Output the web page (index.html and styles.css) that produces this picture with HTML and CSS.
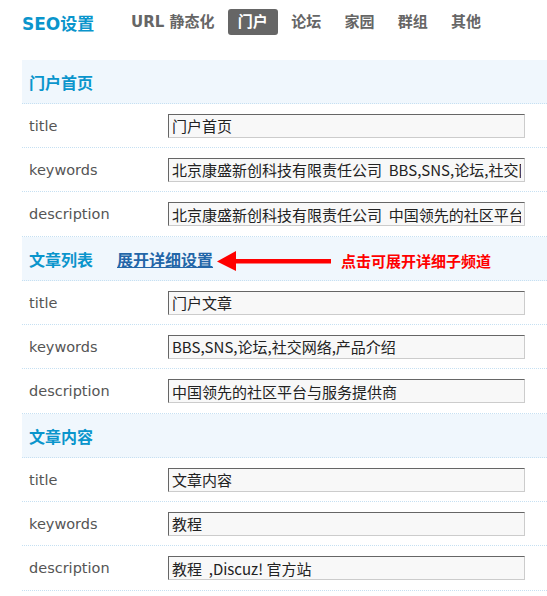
FILE: index.html
```html
<!DOCTYPE html>
<html lang="zh-CN">
<head>
<meta charset="utf-8">
<title>SEO设置</title>
<link rel="stylesheet" href="styles.css">
</head>
<body>
<div class="top">
  <h1 class="brand">SEO设置</h1>
  <nav class="tabs">
    <a class="tab">URL 静态化</a>
    <a class="tab on">门户</a>
    <a class="tab">论坛</a>
    <a class="tab">家园</a>
    <a class="tab">群组</a>
    <a class="tab">其他</a>
  </nav>
</div>

<div class="panel">
  <section class="group">
    <div class="sec"><span class="sec-title">门户首页</span></div>
    <div class="row"><span class="label">title</span><input class="field" value="门户首页"></div>
    <div class="row"><span class="label">keywords</span><input class="field" value="北京康盛新创科技有限责任公司  BBS,SNS,论坛,社交网络,产品介绍"></div>
    <div class="row"><span class="label">description</span><input class="field" value="北京康盛新创科技有限责任公司  中国领先的社区平台与服务提供商"></div>
  </section>

  <section class="group">
    <div class="sec">
      <span class="sec-title">文章列表</span>
      <a class="more">展开详细设置</a>
      <svg class="arrow" width="114" height="22" viewBox="0 0 114 22">
        <polygon points="0,11.5 19,1 19,21" fill="#ff0000"/>
        <rect x="18" y="9" width="96" height="4.5" fill="#ff0000"/>
      </svg>
      <span class="tip">点击可展开详细子频道</span>
    </div>
    <div class="row"><span class="label">title</span><input class="field" value="门户文章"></div>
    <div class="row"><span class="label">keywords</span><input class="field" value="BBS,SNS,论坛,社交网络,产品介绍"></div>
    <div class="row"><span class="label">description</span><input class="field" value="中国领先的社区平台与服务提供商"></div>
  </section>

  <section class="group">
    <div class="sec"><span class="sec-title">文章内容</span></div>
    <div class="row"><span class="label">title</span><input class="field" value="文章内容"></div>
    <div class="row"><span class="label">keywords</span><input class="field" value="教程"></div>
    <div class="row"><span class="label">description</span><input class="field" value="教程  ,Discuz! 官方站"></div>
  </section>
</div>
</body>
</html>
```

FILE: styles.css
```css
body {
  margin: 0;
  background: #fff;
  font-family: "DejaVu Sans", "Noto Sans CJK SC", sans-serif;
  overflow: hidden;
}

.top {
  display: flex;
  align-items: center;
  height: 26px;
  padding: 9px 0 0 22px;
}

.brand {
  margin: 0;
  width: 99px;
  flex: none;
  font-size: 17px;
  font-weight: bold;
  color: #0a95cc;
  white-space: nowrap;
}

.tabs {
  display: flex;
  gap: 3.3px;
}

.tab {
  height: 26px;
  line-height: 26px;
  padding: 0 10px;
  border-radius: 3px;
  font-size: 15px;
  font-weight: bold;
  color: #666;
  white-space: nowrap;
}

.tab.on {
  background: #666;
  color: #fff;
}

.panel {
  margin: 25px 0 0 22px;
}

.sec {
  display: flex;
  align-items: center;
  height: 43px;
  padding-left: 7px;
  background: #f0f7fd;
  border-bottom: 1px dotted #c6e0f2;
  white-space: nowrap;
}

.sec-title {
  font-size: 16px;
  font-weight: bold;
  color: #0a95cc;
}

.more {
  margin-left: 24px;
  font-size: 16px;
  font-weight: bold;
  color: #2366a8;
  text-decoration: underline;
}

.arrow {
  margin-left: 4px;
  margin-top: 4px;
  flex: none;
}

.tip {
  margin-left: 10px;
  margin-top: 4px;
  font-size: 15px;
  font-weight: bold;
  color: #ff0000;
}

.row {
  display: flex;
  align-items: center;
  height: 43px;
  border-bottom: 1px dotted #c6e0f2;
}

.row:last-child {
  height: 44px;
}

.label {
  width: 139px;
  padding-left: 7px;
  flex: none;
  font-size: 14.5px;
  color: #555;
}

.field {
  box-sizing: border-box;
  width: 357px;
  height: 24px;
  margin: 0;
  padding: 0 3px;
  border: 1px solid;
  border-color: #666 #ccc #ccc #666;
  background: #f8f8f8;
  font-family: "Noto Sans CJK SC", sans-serif;
  font-size: 15px;
  color: #222;
  outline: none;
}
```
